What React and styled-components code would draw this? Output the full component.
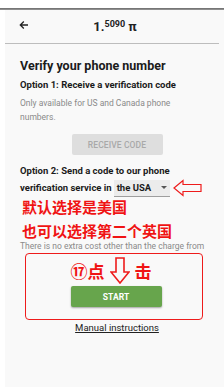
import React from 'react';
import styled, { createGlobalStyle } from 'styled-components';

const Global = createGlobalStyle`
  html, body { margin: 0; padding: 0; background: #fff; }
  body { font-family: Roboto, "Noto Sans", "Liberation Sans", sans-serif; }
`;

const Screen = styled.div`
  width: 224px;
  height: 387px;
  overflow: hidden;
  background: #fff;
`;

const TopLine = styled.div`
  margin-top: 8px;
  height: 2px;
  background: linear-gradient(#6a6a6a, #9a9a9a);
`;

const Panel = styled.div`
  margin-left: 5px;
  height: 377px;
  background: #f9f9f9;
`;

const Header = styled.div`
  position: relative;
  display: flex;
  align-items: center;
  justify-content: center;
  height: 33px;
  margin-right: 5px;
  border-bottom: 1px solid #bdbdbd;
`;

const Back = styled.span`
  position: absolute;
  left: 14px;
  top: 10px;
  display: flex;
`;

const Title = styled.div`
  font-size: 13px;
  font-weight: 700;
  color: #222;
  margin-left: 6px;
  sup { font-size: 9px; vertical-align: 4px; }
`;

const Body = styled.div`
  padding: 14px 14px 0 15px;
  display: flex;
  flex-direction: column;
`;

const H1 = styled.div`
  font-size: 12.5px;
  font-weight: 700;
  color: #1b1b1b;
`;

const H2 = styled.div`
  font-size: 9.5px;
  font-weight: 700;
  color: #1b1b1b;
  line-height: 16px;
  margin-top: ${p => p.$mt || 0}px;
`;

const Note = styled.div`
  font-size: 8.5px;
  color: #8a8a8a;
  line-height: ${p => p.$lh || 14}px;
  margin-top: ${p => p.$mt || 0}px;
  max-width: ${p => (p.$nowrap ? 'none' : '160px')};
  white-space: ${p => (p.$nowrap ? 'nowrap' : 'normal')};
`;

const Button = styled.div`
  align-self: center;
  width: 91px;
  height: 21px;
  margin-left: 4px;
  display: flex;
  align-items: center;
  justify-content: center;
  border-radius: 2px;
  font-size: 8.5px;
  letter-spacing: 0.1px;
  background: ${p => (p.$primary ? '#67a54c' : '#dedede')};
  color: ${p => (p.$primary ? '#fff' : '#a9a9a9')};
  box-shadow: ${p => (p.$primary ? '0 1px 2px rgba(0,0,0,0.35)' : 'none')};
  font-weight: ${p => (p.$primary ? 700 : 500)};
`;

const SelectRow = styled.div`
  display: flex;
  align-items: center;
`;

const Select = styled.div`
  display: flex;
  align-items: center;
  justify-content: space-between;
  width: 50px;
  height: 16px;
  padding: 0 3px 0 3px;
  margin-left: 2px;
  background: #ececec;
  border-bottom: 1px solid #9e9e9e;
  font-size: 9.5px;
  font-weight: 700;
  color: #1b1b1b;
`;

const Caret = styled.span`
  width: 0;
  height: 0;
  border-left: 3px solid transparent;
  border-right: 3px solid transparent;
  border-top: 3px solid #555;
`;

const RedText = styled.div`
  font-family: "Noto Sans CJK SC", sans-serif;
  font-size: 15px;
  font-weight: 700;
  color: #f01414;
  line-height: 20px;
  margin-left: 2px;
  margin-top: ${p => p.$mt || 0}px;
`;

const RedBox = styled.div`
  margin: 1px 0 0 5px;
  width: 176px;
  height: 65px;
  border: 1.5px solid #ee1c1c;
  border-radius: 4px;
  display: flex;
  flex-direction: column;
  align-items: center;
`;

const Hint = styled.div`
  display: flex;
  align-items: center;
  gap: 5px;
  height: 32px;
  margin-left: -6px;
  font-family: "Noto Sans CJK SC", sans-serif;
  font-size: 17px;
  font-weight: 700;
  color: #f01414;
`;

const Manual = styled.div`
  align-self: center;
  margin: 2px 0 0 4px;
  font-size: 9.5px;
  color: #222;
  text-decoration: underline;
`;

export default function App() {
  return (
    <Screen>
      <Global />
      <TopLine />
      <Panel>
        <Header>
          <Back>
            <svg width="10" height="10" viewBox="0 0 10 10" fill="none" stroke="#222" strokeWidth="1.3">
              <path d="M9 5H1.5M4.8 1.5L1.3 5l3.5 3.5" />
            </svg>
          </Back>
          <Title>1.<sup>5090</sup> π</Title>
        </Header>
        <Body>
          <H1>Verify your phone number</H1>
          <H2 $mt={4}>Option 1: Receive a verification code</H2>
          <Note $mt={3}>Only available for US and Canada phone numbers.</Note>
          <div style={{ height: 10 }} />
          <Button>RECEIVE CODE</Button>
          <H2 $mt={8}>Option 2: Send a code to our phone</H2>
          <SelectRow>
            <H2>verification service in</H2>
            <Select>the USA<Caret /></Select>
            <svg width="30" height="18" viewBox="0 0 30 18" style={{ marginLeft: 3 }}>
              <path d="M1 9 L10 1.5 V5.5 H28 V12.5 H10 V16.5 Z" fill="none" stroke="#ee1c1c" strokeWidth="1.2" />
            </svg>
          </SelectRow>
          <RedText $mt={0}>默认选择是美国</RedText>
          <RedText $mt={4}>也可以选择第二个英国</RedText>
          <Note $nowrap $lh={12} $mt={-1}>There is no extra cost other than the charge from</Note>
          <RedBox>
            <Hint>
              <span>⑰点</span>
              <svg width="20" height="27" viewBox="0 0 20 27">
                <path d="M6 1 H14 V15 H19 L10 26 L1 15 H6 Z" fill="none" stroke="#ee1c1c" strokeWidth="1.6" />
              </svg>
              <span>击</span>
            </Hint>
            <Button $primary>START</Button>
          </RedBox>
          <Manual>Manual instructions</Manual>
        </Body>
      </Panel>
    </Screen>
  );
}
